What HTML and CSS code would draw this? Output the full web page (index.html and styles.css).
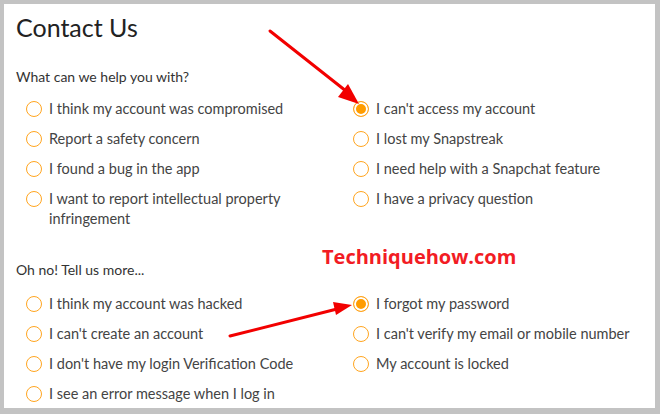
FILE: index.html
```html
<!DOCTYPE html>
<html>
<head>
  <title>Contact Us</title>
  <link rel="stylesheet" href="styles.css">
</head>
<body>

<div class="panel">
  <h1>Contact Us</h1>

  <p class="label">What can we help you with?</p>
  <div class="options">
    <label class="option"><span class="radio"></span><span>I think my account was compromised</span></label>
    <label class="option"><span class="radio checked"></span><span>I can't access my account</span></label>
    <label class="option"><span class="radio"></span><span>Report a safety concern</span></label>
    <label class="option"><span class="radio"></span><span>I lost my Snapstreak</span></label>
    <label class="option"><span class="radio"></span><span>I found a bug in the app</span></label>
    <label class="option"><span class="radio"></span><span>I need help with a Snapchat feature</span></label>
    <label class="option"><span class="radio"></span><span>I want to report intellectual property infringement</span></label>
    <label class="option"><span class="radio"></span><span>I have a privacy question</span></label>
  </div>

  <p class="label second">Oh no! Tell us more...</p>
  <div class="options">
    <label class="option"><span class="radio"></span><span>I think my account was hacked</span></label>
    <label class="option"><span class="radio checked"></span><span>I forgot my password</span></label>
    <label class="option"><span class="radio"></span><span>I can't create an account</span></label>
    <label class="option"><span class="radio"></span><span>I can't verify my email or mobile number</span></label>
    <label class="option"><span class="radio"></span><span>I don't have my login Verification Code</span></label>
    <label class="option"><span class="radio"></span><span>My account is locked</span></label>
    <label class="option"><span class="radio"></span><span>I see an error message when I log in</span></label>
  </div>
</div>

<div class="watermark">Techniquehow.com</div>

<svg class="arrows" width="660" height="414" viewBox="0 0 660 414">
  <!-- arrow to "I can't access my account" -->
  <line x1="270" y1="31" x2="346" y2="91" stroke="#f20000" stroke-width="3" stroke-linecap="round"/>
  <polygon points="359,104 338,97 348,84" fill="#f20000"/>
  <!-- arrow to "I forgot my password" -->
  <line x1="230" y1="336" x2="337" y2="309" stroke="#f20000" stroke-width="3" stroke-linecap="round"/>
  <polygon points="352,305 336,315 333,302" fill="#f20000"/>
</svg>

</body>
</html>
```

FILE: styles.css
```css
body {
  margin: 0;
  background: #c3c3c3;
  padding: 4px 5px 6px 4px;
  height: 414px;
  box-sizing: border-box;
  font-family: Lato, "Open Sans", sans-serif;
  color: #333;
  position: relative;
}
.panel {
  background: #fff;
  height: 100%;
  padding: 8px 12px 0 12px;
  box-sizing: border-box;
  overflow: hidden;
}
h1 {
  margin: 0;
  font-size: 25px;
  font-weight: normal;
  line-height: 30px;
  color: #222;
}
.label {
  margin: 25px 0 7px 0;
  font-size: 14px;
  line-height: 20px;
}
.label.second {
  margin: 26px 0 9px 0;
}
.options {
  display: grid;
  grid-template-columns: 327px 1fr;
  margin-left: 10px;
}
.option {
  display: flex;
  align-items: flex-start;
  gap: 7px;
  padding: 5px 0;
  font-size: 14.5px;
  line-height: 20px;
  color: #444;
  padding-right: 20px;
}
.options .option:nth-child(even) {
  padding-right: 0;
}
.radio {
  flex: none;
  width: 16px;
  height: 16px;
  margin-top: 2px;
  border: 1.5px solid #ffa51f;
  border-radius: 50%;
  box-sizing: border-box;
}
.radio.checked {
  background: #ff9c00;
  box-shadow: inset 0 0 0 2px #fff;
}
.watermark {
  position: absolute;
  left: 322px;
  top: 243px;
  font-family: "Open Sans", sans-serif;
  font-weight: bold;
  font-size: 20px;
  color: #f21c24;
}
.arrows {
  position: absolute;
  left: 0;
  top: 0;
  pointer-events: none;
}
```
